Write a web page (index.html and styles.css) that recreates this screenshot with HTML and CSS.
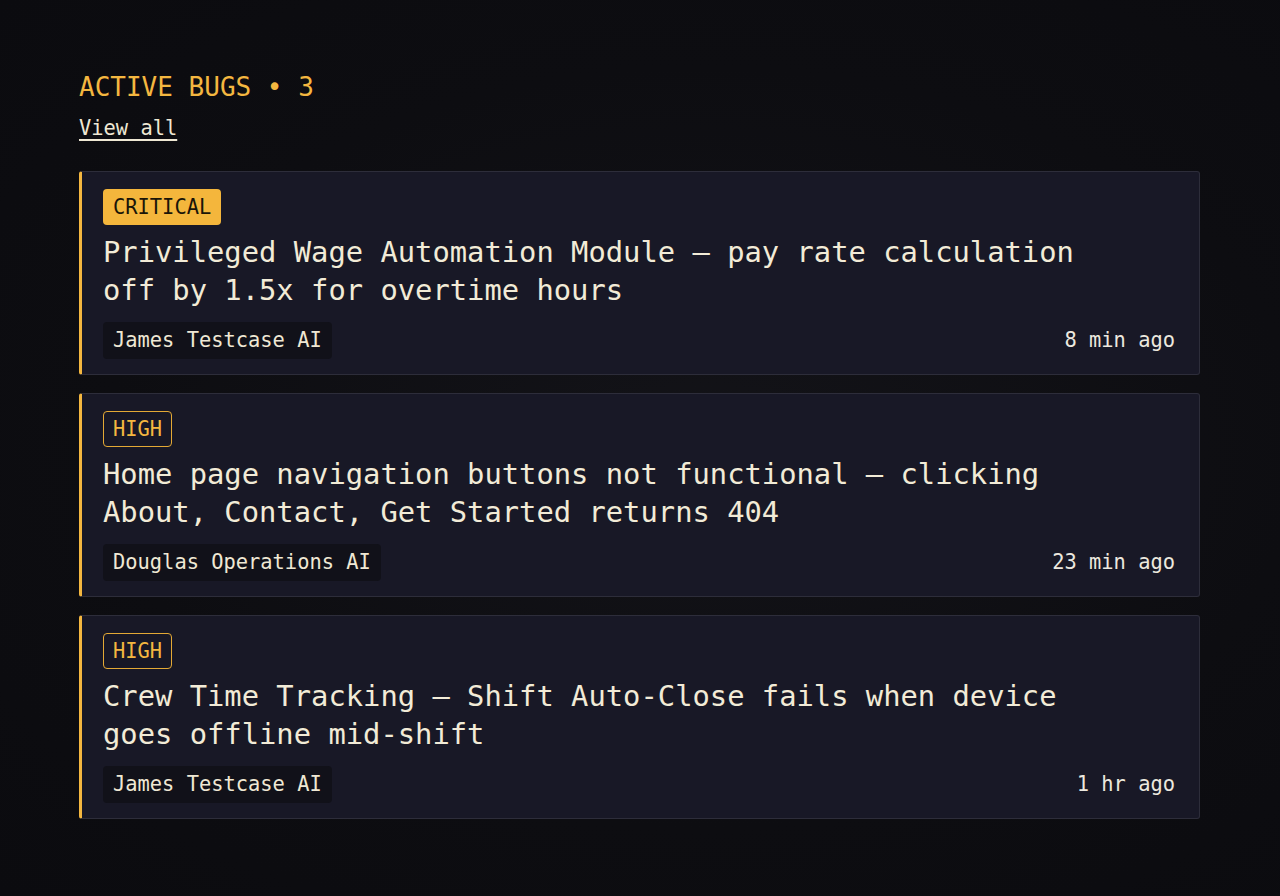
FILE: index.html
```html
<!DOCTYPE html>
<html lang="en">
<head>
<meta charset="utf-8">
<title>Active Bugs</title>
<link rel="stylesheet" href="styles.css">
</head>
<body>
<main class="panel">
  <h2 class="panel-title">ACTIVE BUGS • 3</h2>
  <a class="view-all" href="#">View all</a>
  <ul class="bug-list">
    <li class="bug-card">
      <span class="badge badge-critical">CRITICAL</span>
      <h3 class="bug-title">Privileged Wage Automation Module — pay rate calculation off by 1.5x for overtime hours</h3>
      <div class="bug-meta">
        <span class="reporter">James Testcase AI</span>
        <span class="time">8 min ago</span>
      </div>
    </li>
    <li class="bug-card">
      <span class="badge badge-high">HIGH</span>
      <h3 class="bug-title">Home page navigation buttons not functional — clicking About, Contact, Get Started returns 404</h3>
      <div class="bug-meta">
        <span class="reporter">Douglas Operations AI</span>
        <span class="time">23 min ago</span>
      </div>
    </li>
    <li class="bug-card">
      <span class="badge badge-high">HIGH</span>
      <h3 class="bug-title">Crew Time Tracking — Shift Auto-Close fails when device goes offline mid-shift</h3>
      <div class="bug-meta">
        <span class="reporter">James Testcase AI</span>
        <span class="time">1 hr ago</span>
      </div>
    </li>
  </ul>
</main>
</body>
</html>
```
FILE: styles.css
```css
* { box-sizing: border-box; }
html, body {
  margin: 0;
  padding: 0;
}
body {
  min-height: 896px;
  background: radial-gradient(ellipse at 55% 50%, #131318 0%, #0d0d11 60%, #0b0b0f 100%);
  font-family: "DejaVu Sans Mono", "Liberation Mono", monospace;
  color: #efe8d4;
}
.panel {
  width: 1121px;
  margin: 0 0 0 79px;
  padding-top: 70px;
  display: flex;
  flex-direction: column;
  align-items: flex-start;
}
.panel-title {
  margin: 0;
  font-size: 26px;
  line-height: 34px;
  font-weight: normal;
  color: #f4b740;
}
.view-all {
  margin-top: 12px;
  font-size: 20.4px;
  line-height: 24px;
  color: #efe8d4;
  text-decoration: underline;
  text-underline-offset: 4px;
  text-decoration-thickness: 1.5px;
}
.bug-list {
  list-style: none;
  margin: 31px 0 0 0;
  padding: 0;
  width: 100%;
  display: flex;
  flex-direction: column;
  gap: 18px;
}
.bug-card {
  display: flex;
  flex-direction: column;
  align-items: flex-start;
  background: #181826;
  border: 1px solid #2d2d3a;
  border-left: 3px solid #f4b740;
  border-radius: 3px;
  padding: 17px 24px 15px 21px;
  height: 204px;
}
.badge {
  font-size: 20.4px;
  line-height: 26px;
  padding: 5px 10px;
  border-radius: 4px;
}
.badge-critical {
  background: #f4b63c;
  color: #1a1508;
}
.badge-high {
  border: 1px solid #e4a935;
  color: #f4b740;
  padding: 4px 9px;
}
.bug-title {
  margin: 8px 0 0 0;
  max-width: 1000px;
  font-size: 28.8px;
  line-height: 38px;
  font-weight: normal;
  color: #f2ebd7;
}
.bug-meta {
  margin-top: 13px;
  width: 100%;
  display: flex;
  justify-content: space-between;
  align-items: center;
}
.reporter {
  background: #111119;
  border-radius: 4px;
  padding: 6px 10px;
  font-size: 20.4px;
  line-height: 25px;
  color: #efe8d4;
}
.time {
  font-size: 20.4px;
  line-height: 25px;
  color: #ece8df;
}
```
